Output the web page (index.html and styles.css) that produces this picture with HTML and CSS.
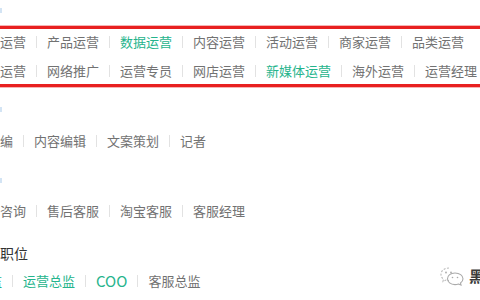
FILE: index.html
```html
<!DOCTYPE html>
<html lang="zh-CN">
<head>
    <meta charset="UTF-8">
    <meta name="viewport" content="width=device-width, initial-scale=1.0">
    <title>职位分类</title>
    <link rel="stylesheet" href="styles.css">
</head>
<body>

    <div class="page">
        <div class="mark mark-top"></div>

        <div class="box">
            <div class="row">
                <span class="item">运营</span><i class="sep"></i>
                <span class="item">产品运营</span><i class="sep"></i>
                <span class="item on">数据运营</span><i class="sep"></i>
                <span class="item">内容运营</span><i class="sep"></i>
                <span class="item">活动运营</span><i class="sep"></i>
                <span class="item">商家运营</span><i class="sep"></i>
                <span class="item">品类运营</span>
            </div>
            <div class="row">
                <span class="item">运营</span><i class="sep"></i>
                <span class="item">网络推广</span><i class="sep"></i>
                <span class="item">运营专员</span><i class="sep"></i>
                <span class="item">网店运营</span><i class="sep"></i>
                <span class="item on">新媒体运营</span><i class="sep"></i>
                <span class="item">海外运营</span><i class="sep"></i>
                <span class="item">运营经理</span>
            </div>
        </div>

        <div class="mark mark-mid"></div>

        <div class="row row-edit">
            <span class="item">编</span><i class="sep"></i>
            <span class="item">内容编辑</span><i class="sep"></i>
            <span class="item">文案策划</span><i class="sep"></i>
            <span class="item">记者</span>
        </div>

        <div class="mark mark-low"></div>

        <div class="row row-service">
            <span class="item">咨询</span><i class="sep"></i>
            <span class="item">售后客服</span><i class="sep"></i>
            <span class="item">淘宝客服</span><i class="sep"></i>
            <span class="item">客服经理</span>
        </div>

        <div class="title">职位</div>

        <div class="row row-lead">
            <span class="item on">监</span><i class="sep"></i>
            <span class="item on">运营总监</span><i class="sep"></i>
            <span class="item on latin">COO</span><i class="sep"></i>
            <span class="item">客服总监</span>
        </div>
    </div>

    <div class="watermark">
        <svg width="24" height="20" viewBox="0 0 24 20">
            <path d="M9 2 C4 2 1 5 1 8.5 C1 10.5 2 12 3.5 13 L3 15.5 L6 14 C7 14.4 8 14.6 9 14.6" fill="none" stroke="#bbb" stroke-width="1.1" stroke-dasharray="2 1.5"/>
            <path d="M15 7 C19.5 7 23 9.5 23 12.8 C23 14.5 22 16 20.5 17 L21 19 L18.5 18 C17.4 18.4 16.2 18.6 15 18.6 C10.5 18.6 7.5 16 7.5 12.8 C7.5 9.5 10.5 7 15 7 Z" fill="none" stroke="#aaa" stroke-width="1.1"/>
            <circle cx="6" cy="6.5" r="0.9" fill="#aaa"/>
            <circle cx="11" cy="6.5" r="0.9" fill="#aaa"/>
            <circle cx="12.5" cy="11.5" r="0.8" fill="#aaa"/>
            <circle cx="17.5" cy="11.5" r="0.8" fill="#aaa"/>
        </svg>
        <span class="brand">黑马</span>
    </div>

</body>
</html>
```

FILE: styles.css
```css
html, body {
    margin: 0;
    padding: 0;
    width: 480px;
    height: 300px;
    overflow: hidden;
    background-color: #fff;
}

body {
    font-family: "Noto Sans CJK SC", "Noto Sans", sans-serif;
    font-size: 13px;
    color: #727272;
    position: relative;
}

.page {
    width: 480px;
    overflow: hidden;
}

.mark {
    width: 2px;
    height: 5px;
    background-color: #d3e4f4;
}

.mark-top {
    margin-top: 8px;
}

.box {
    margin-top: 13px;
    border-top: 3px solid #e82020;
    border-bottom: 3px solid #e82020;
    box-shadow: 0 -1px 0 #f7b4b4, 0 1px 0 #f7b4b4;
    display: flex;
    flex-direction: column;
    gap: 3px;
}

.row {
    display: flex;
    align-items: center;
    height: 26px;
    white-space: nowrap;
}

.item {
    flex: none;
    line-height: 26px;
}

.item.on {
    color: #25b48c;
}

.item.latin {
    font-size: 15px;
}

.sep {
    flex: none;
    width: 1px;
    height: 12px;
    margin: 0 10px;
    background-color: #e2e2e2;
}

.mark-mid {
    margin-top: 20px;
}

.row-edit {
    margin-top: 16px;
}

.mark-low {
    margin-top: 24px;
}

.row-service {
    margin-top: 15px;
}

.title {
    margin-top: 16px;
    height: 26px;
    line-height: 26px;
    font-size: 14px;
    color: #333;
}

.row-lead {
    margin-top: 2px;
    margin-left: -11px;
}

.watermark {
    position: absolute;
    left: 440px;
    top: 265px;
    display: flex;
    align-items: center;
    gap: 5px;
}

.brand {
    font-size: 15px;
    font-weight: bold;
    color: #3a3a3a;
    white-space: nowrap;
}
```
